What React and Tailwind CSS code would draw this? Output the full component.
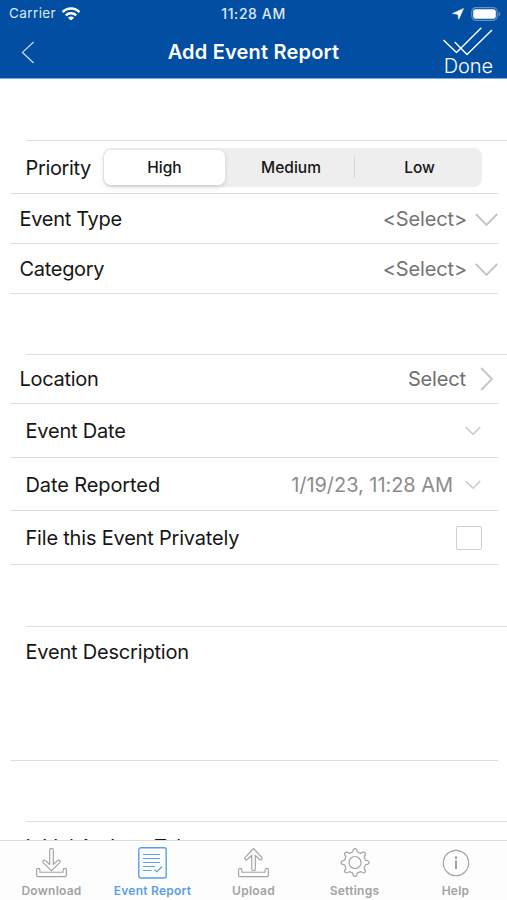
import React from 'react';

function Chevron({ className, d, box, width = 1.5 }) {
  return (
    <svg className={className} viewBox={box} fill="none" stroke="currentColor" strokeWidth={width}>
      <path d={d} />
    </svg>
  );
}

function BigDown() {
  return <Chevron className="ml-[8px] mt-[3px] h-[14px] w-[23px] shrink-0 text-[#c4c4c4]" box="0 0 23 14" d="M.8 1 11.5 12 22.2 1" width={1.8} />;
}

function SmallDown() {
  return <Chevron className="mt-px h-[10px] w-[16px] shrink-0 text-[#c9c9c9]" box="0 0 16 10" d="M.7 1 8 8.3 15.3 1" width={1.5} />;
}

function Row({ className, children }) {
  return <div className={'ml-[10px] mr-[9px] flex items-center border-b border-[#dedede] ' + className}>{children}</div>;
}

function StatusBar() {
  return (
    <div className="flex h-[27px] items-center text-[13.5px] leading-none text-[#dce9fa]">
      <div className="flex w-[200px] items-center pl-[9px]">
        <span className="w-[48px] whitespace-nowrap tracking-[0.4px]">Carrier</span>
        <svg className="ml-[4px] h-[14px] w-[20px] text-white" viewBox="0 0 20 14" fill="none" stroke="currentColor" strokeWidth="2.5">
          <path d="M1.6 5.1a11.8 11.8 0 0 1 16.8 0M4.8 8.4a7.4 7.4 0 0 1 10.4 0" />
          <path d="M10 13.6 6.9 10.7a4.4 4.4 0 0 1 6.2 0Z" fill="currentColor" stroke="none" />
        </svg>
      </div>
      <span className="w-[107px] whitespace-nowrap pt-px text-center text-[14px] font-medium tracking-[0.6px]">11:28 AM</span>
      <div className="flex flex-1 items-center justify-end pr-[6px]">
        <svg className="h-[12px] w-[12px]" viewBox="0 0 12 12" fill="white"><path d="M11.5.6 6.7 11.3 6 6.3.6 5.5Z" stroke="white" strokeWidth=".6" /></svg>
        <svg className="ml-[7px] h-[14px] w-[30px]" viewBox="0 0 30 14" fill="none">
          <rect x=".8" y=".7" width="25.4" height="12.6" rx="4" stroke="#5f93d0" strokeWidth="1.2" />
          <rect x="2.2" y="2.2" width="22.6" height="9.6" rx="2.4" fill="white" />
          <path d="M27.6 4.6c2.3.8 2.3 4 0 4.8Z" fill="#5f93d0" />
        </svg>
      </div>
    </div>
  );
}

function Header() {
  return (
    <header className="h-[79px] shrink-0 border-b border-[#77a9dc] bg-[#024ea2]">
      <StatusBar />
      <div className="flex h-[51px]">
        <div className="w-[100px] pl-[21px] pt-[14px]">
          <Chevron className="h-[23px] w-[14px] text-[#c5daf3]" box="0 0 14 23" d="M12.6 1 1.5 11.4 12.6 22" width={1.3} />
        </div>
        <h1 className="flex-1 whitespace-nowrap pt-[13px] text-center text-[20px] font-semibold leading-[24px] tracking-[0.2px] text-white">Add Event Report</h1>
        <div className="flex w-[100px] flex-col items-end pr-[14px] text-white">
          <svg className="h-[29px] w-[51px]" viewBox="0 0 51 29" fill="none" stroke="currentColor" strokeWidth="1.4">
            <path d="M1.5 13 14.5 25.5 39.3.8M12.7 15 25 27.5 50 3" />
          </svg>
          <span className="whitespace-nowrap text-[20px] font-light leading-[20px] tracking-[-0.1px]">Done</span>
        </div>
      </div>
    </header>
  );
}

function Priority() {
  return (
    <Row className="h-[53px] pl-[15.5px]">
      <span className="w-[77.5px] whitespace-nowrap pt-px tracking-[-0.35px]">Priority</span>
      <div className="flex h-[39px] w-[379px] items-center rounded-[8px] bg-[#eeeeee] text-[15.5px] font-medium tracking-[0px]">
        <div className="ml-[1px] flex h-[35px] w-[121px] items-center justify-center rounded-[7px] bg-white pt-px shadow-[0_2px_5px_rgba(0,0,0,0.14)]">High</div>
        <div className="flex h-[22px] w-[130px] items-center justify-center border-r border-[#d5d5d5] pl-[3px] pt-px">Medium</div>
        <div className="flex flex-1 items-center justify-center pl-[2px] pt-px">Low</div>
      </div>
    </Row>
  );
}

const stroke = { fill: 'none', stroke: 'currentColor', strokeWidth: 1.15, strokeLinejoin: 'round' };
const tray = 'M2 21.3Q3.9 21.3 3.9 23V25.2H27.1V23Q27.1 21.3 29 21.3Q30.4 21.3 30.4 23V28.2Q30.4 29.6 29 29.6H2Q.6 29.6 .6 28.2V23Q.6 21.3 2 21.3Z';

function DownloadIcon() {
  return (
    <svg className="h-[32px] w-[31px]" viewBox="0 0 31 32" {...stroke}>
      <path d={tray} />
      <path d="M13.7 17.5V3.2a1.8 1.8 0 0 1 3.6 0V17.5L21.4 13.6a1.5 1.5 0 0 1 2.3 2L15.5 23.8 7.2 15.6a1.5 1.5 0 0 1 2.3-2Z" />
    </svg>
  );
}

function ReportIcon() {
  return (
    <svg className="h-[32px] w-[29px]" viewBox="0 0 29 32" {...stroke}>
      <rect x=".8" y=".8" width="27.4" height="30.2" rx="2" strokeWidth="1.4" />
      <path d="M5 7.5H22M5 11.5H22M5 15.5H22M5 19.5H17M5 23.5H13.5M16.5 22.5 19 24.8 24 19.5" />
    </svg>
  );
}

function UploadIcon() {
  return (
    <svg className="h-[32px] w-[31px]" viewBox="0 0 31 32" {...stroke}>
      <path d={tray} />
      <path d="M13.7 8.5V22a1.8 1.8 0 0 0 3.6 0V8.5L21.4 12.3a1.5 1.5 0 0 0 2.3-2L15.5 1.5 7.2 10.3a1.5 1.5 0 0 0 2.3 2Z" />
    </svg>
  );
}

function SettingsIcon() {
  return (
    <svg className="h-[32px] w-[30px]" viewBox="0 0 30 32" {...stroke}>
      <g transform="translate(15 15.5)">
        <circle r="6" />
        <path d="M-2.3-10.5Q-2-14 0-14T2.3-10.5L5.8-9.1Q8.5-11.3 9.9-9.9T9.1-5.8L10.5-2.3Q14-2 14 0T10.5 2.3L9.1 5.8Q11.3 8.5 9.9 9.9T5.8 9.1L2.3 10.5Q2 14 0 14T-2.3 10.5L-5.8 9.1Q-8.5 11.3-9.9 9.9T-9.1 5.8L-10.5 2.3Q-14 2-14 0T-10.5-2.3L-9.1-5.8Q-11.3-8.5-9.9-9.9T-5.8-9.1Z" />
      </g>
    </svg>
  );
}

function HelpIcon() {
  return (
    <svg className="h-[32px] w-[30px]" viewBox="0 0 30 32" {...stroke}>
      <circle cx="15" cy="16" r="12.7" />
      <path d="M15 13.5V22" strokeWidth="2" />
      <circle cx="15" cy="10.5" r="1.3" fill="currentColor" stroke="none" />
    </svg>
  );
}

const tabs = [
  { name: 'Download', Icon: DownloadIcon },
  { name: 'Event Report', Icon: ReportIcon, active: true },
  { name: 'Upload', Icon: UploadIcon },
  { name: 'Settings', Icon: SettingsIcon },
  { name: 'Help', Icon: HelpIcon },
];

function TabBar() {
  return (
    <nav className="flex h-[60px] shrink-0 border-t border-[#dcdcdc] bg-[#fdfdfd] px-px">
      {tabs.map(({ name, Icon, active }) => (
        <div key={name} className={'flex flex-1 flex-col items-center pt-[6px] ' + (active ? 'text-[#5b9fe8]' : 'text-[#a2a2a2]')}>
          <Icon />
          <span className="mt-[5px] whitespace-nowrap text-[12px] font-semibold leading-[14px] tracking-[0.25px]">{name}</span>
        </div>
      ))}
    </nav>
  );
}

export default function App() {
  return (
    <div className="flex h-[900px] w-[507px] flex-col overflow-hidden bg-white font-['Inter',sans-serif] text-[20px] leading-[24px] tracking-[-0.2px] text-[#161616]">
      <Header />
      <main className="min-h-0 flex-1 overflow-hidden">
        <div className="ml-[26px] h-[62px] border-b border-[#dedede]" />
        <Priority />
        <Row className="h-[50px] pl-[9.5px]">
          <span className="flex-1 tracking-[-0.3px]">Event Type</span>
          <span className="tracking-[-0.15px] text-[#747474]">&lt;Select&gt;</span>
          <BigDown />
        </Row>
        <Row className="h-[50px] pl-[9.5px]">
          <span className="flex-1 tracking-[-0.3px]">Category</span>
          <span className="tracking-[-0.15px] text-[#747474]">&lt;Select&gt;</span>
          <BigDown />
        </Row>
        <div className="ml-[26px] h-[61px] border-b border-[#dedede]" />
        <Row className="h-[49px] pl-[9.5px]">
          <span className="flex-1 tracking-[-0.3px]">Location</span>
          <span className="tracking-[-0.15px] text-[#6f6f6f]">Select</span>
          <Chevron className="ml-[14px] mr-[4px] h-[24px] w-[14px] text-[#c4c4c4]" box="0 0 14 24" d="M1.2 1 12 12 1.2 23" width={1.8} />
        </Row>
        <Row className="h-[54px] pl-[15.5px] pr-[17px]">
          <span className="flex-1">Event Date</span>
          <SmallDown />
        </Row>
        <Row className="h-[53px] pl-[15.5px] pr-[17px]">
          <span className="flex-1 pt-px tracking-[-0.1px]">Date Reported</span>
          <span className="mr-[12px] pt-px tracking-[-0.05px] text-[#8c8c8c]">1/19/23, 11:28 AM</span>
          <SmallDown />
        </Row>
        <Row className="h-[54px] pl-[15.5px] pr-[16px]">
          <span className="flex-1 pt-px">File this Event Privately</span>
          <span className="h-[24px] w-[26px] rounded-[2px] border border-[#cfcfcf]" />
        </Row>
        <div className="ml-[26px] h-[62px] border-b border-[#dedede]" />
        <div className="ml-[10px] mr-[9px] h-[134px] border-b border-[#dedede] pl-[15.5px] pt-[13px]">Event Description</div>
        <div className="ml-[26px] h-[61px] border-b border-[#dedede]" />
        <div className="pl-[25.5px] pt-[13px]">Initial Actions Taken</div>
      </main>
      <TabBar />
    </div>
  );
}
